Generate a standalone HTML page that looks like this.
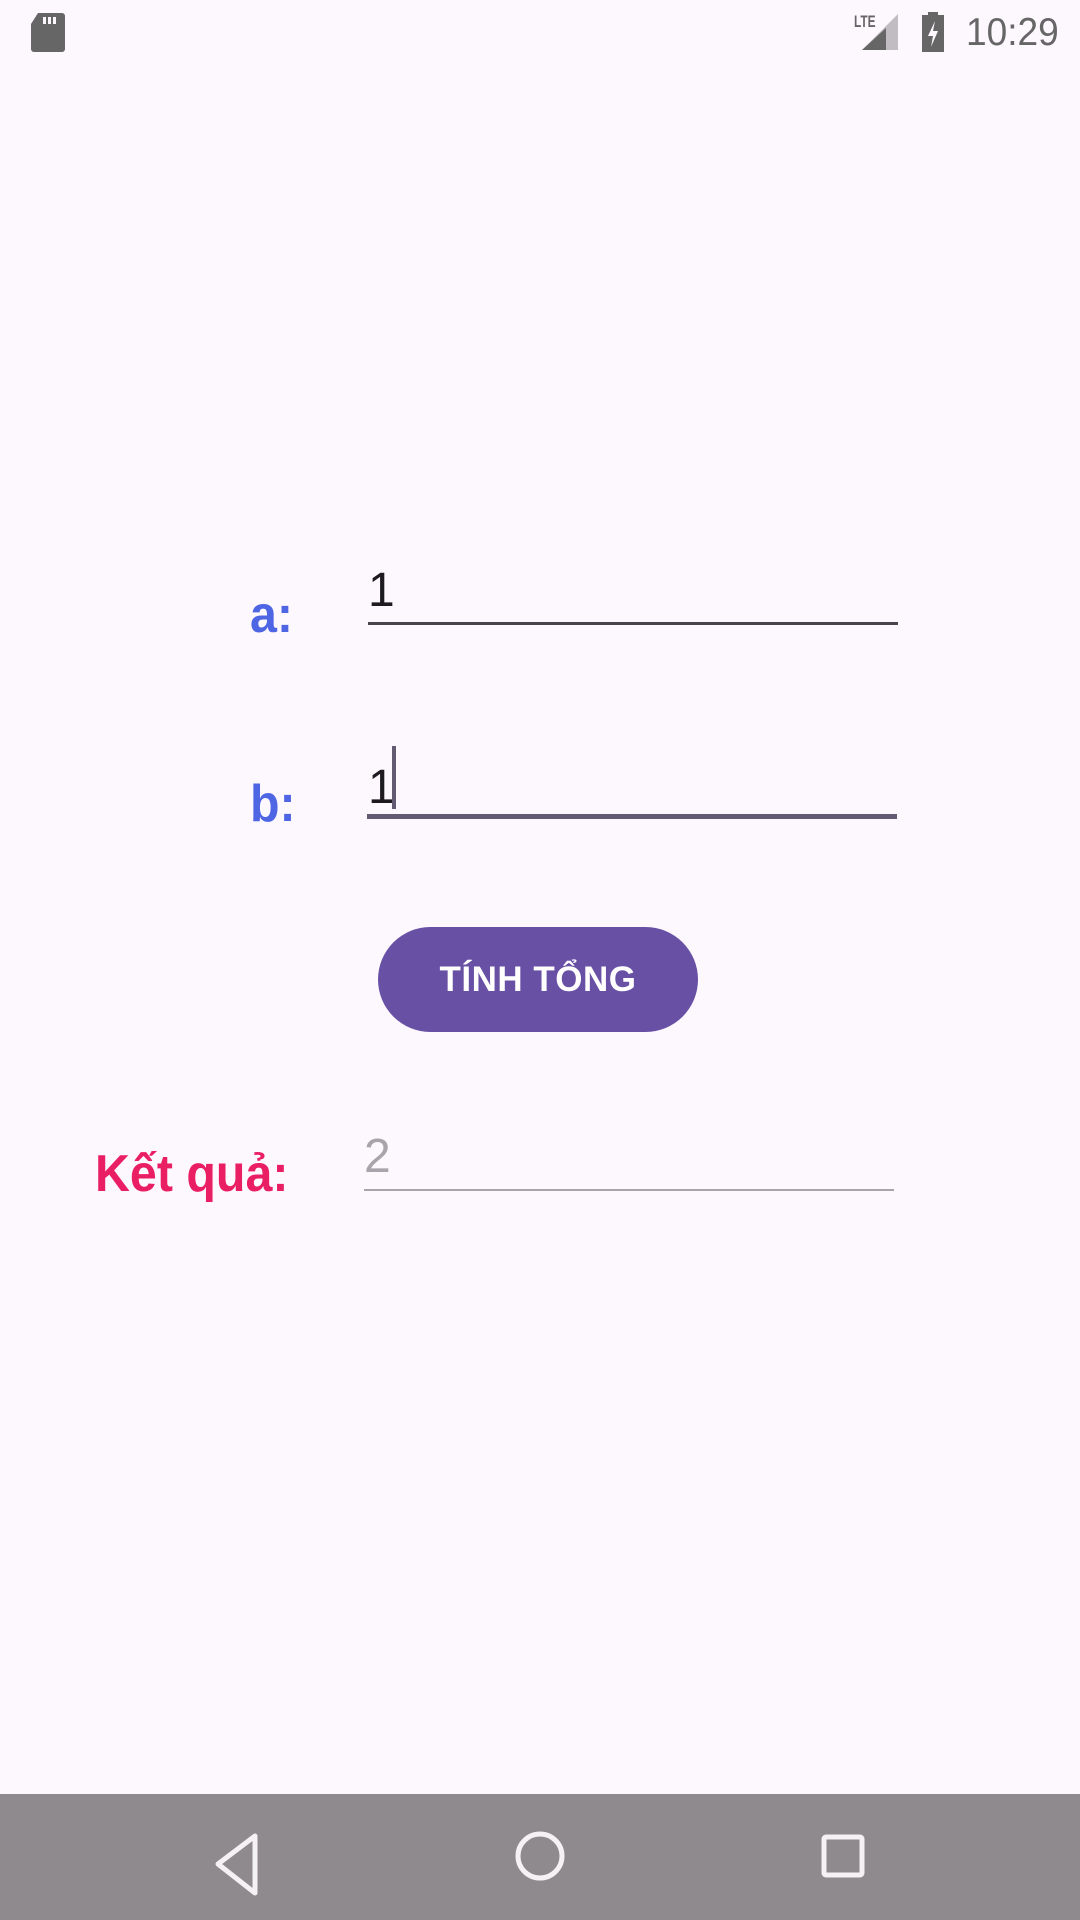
<!DOCTYPE html>
<html><head><meta charset="utf-8"><style>
*{margin:0;padding:0;box-sizing:border-box}
body{width:1080px;height:1920px;background:#fdf7fe;position:relative;overflow:hidden;font-family:"Liberation Sans",sans-serif}
.abs{position:absolute}
.lbl{position:absolute;font-weight:bold;font-size:52px;line-height:1;white-space:nowrap;transform:scaleX(0.93);transform-origin:left}
.val{position:absolute;font-size:48px;line-height:1;color:#1d1b20}
</style></head><body>
<!-- status bar -->
<svg class="abs" style="left:30px;top:12px" width="36" height="40" viewBox="0 0 36 40"><path d="M8 1h24a3 3 0 0 1 3 3v33a3 3 0 0 1-3 3H4a3 3 0 0 1-3-3V12z" fill="#666"/><rect x="13" y="5" width="3" height="7" fill="#fdf7fe"/><rect x="18" y="5" width="3" height="7" fill="#fdf7fe"/><rect x="23" y="5" width="3" height="7" fill="#fdf7fe"/></svg>
<div class="abs" style="left:854px;top:12px;font-size:17px;font-weight:bold;color:#666;transform:scaleX(0.7);transform-origin:left">LTE</div>
<svg class="abs" style="left:862px;top:14px" width="40" height="36" viewBox="0 0 40 36"><path d="M36 0V36H0z" fill="#c0bcc2"/><path d="M24 14V36H0z" fill="#666"/></svg>
<svg class="abs" style="left:920px;top:12px" width="26" height="40" viewBox="0 0 26 40"><rect x="8" y="0" width="10" height="4" fill="#666"/><rect x="2" y="3" width="22" height="37" fill="#666"/><path d="M15 9l-7 15h5l-2 11 7-16h-5z" fill="#fdf7fe"/></svg>
<div class="abs" style="left:966px;top:11px;font-size:39px;color:#666;transform:scaleX(0.95);transform-origin:left">10:29</div>

<!-- a -->
<div class="lbl" style="left:250px;top:589px;color:#4e66e4">a:</div>
<div class="val" style="left:368px;top:567px">1</div>
<div class="abs" style="left:368px;top:622px;width:530px;height:3px;background:#49454f"></div>

<!-- b -->
<div class="lbl" style="left:250px;top:778px;color:#4e66e4">b:</div>
<div class="val" style="left:368px;top:764px">1</div>
<div class="abs" style="left:392px;top:746px;width:4px;height:63px;background:#625b71"></div>
<div class="abs" style="left:367px;top:814px;width:530px;height:5px;background:#625b71"></div>

<!-- button -->
<div class="abs" style="left:378px;top:927px;width:320px;height:105px;border-radius:53px;background:#6851a5;color:#fff;font-weight:bold;font-size:35px;display:flex;align-items:center;justify-content:center;letter-spacing:0.5px;font-family:'Liberation Sans','Noto Sans CJK SC',sans-serif">TÍNH TỔNG</div>

<!-- result -->
<div class="lbl" style="left:95px;top:1148px;color:#e91e63;font-family:'Liberation Sans','Noto Sans CJK SC',sans-serif">Kết quả:</div>
<div class="val" style="left:364px;top:1133px;color:#a9a4ab">2</div>
<div class="abs" style="left:364px;top:1189px;width:530px;height:2px;background:#a9a4ab"></div>

<!-- nav -->
<div class="abs" style="left:0;top:1794px;width:1080px;height:126px;background:#8e8a8e"></div>
<svg class="abs" style="left:0;top:1794px" width="1080" height="126" viewBox="0 0 1080 126">
<path d="M255 42V99L218 70z" fill="none" stroke="#f4f2f4" stroke-width="5" stroke-linejoin="round"/>
<circle cx="540" cy="62" r="22" fill="none" stroke="#f4f2f4" stroke-width="5"/>
<rect x="824" y="43" width="38" height="38" rx="2" fill="none" stroke="#f4f2f4" stroke-width="5"/>
</svg>
</body></html>
